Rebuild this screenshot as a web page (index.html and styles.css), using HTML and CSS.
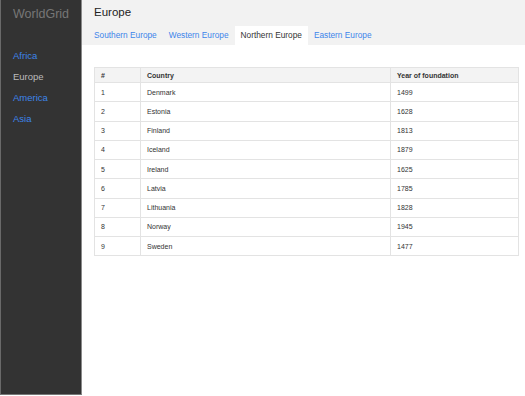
FILE: index.html
```html
<!DOCTYPE html>
<html>
<head>
<meta charset="utf-8">
<title>WorldGrid</title>
<link rel="stylesheet" href="styles.css">
</head>
<body>
<div class="app">
  <aside class="sidebar">
    <div class="brand">WorldGrid</div>
    <nav class="nav">
      <a class="nav-item">Africa</a>
      <a class="nav-item active">Europe</a>
      <a class="nav-item">America</a>
      <a class="nav-item">Asia</a>
    </nav>
  </aside>
  <main class="main">
    <header class="header">
      <h1 class="title">Europe</h1>
      <div class="tabs">
        <a class="tab">Southern Europe</a>
        <a class="tab">Western Europe</a>
        <a class="tab active">Northern Europe</a>
        <a class="tab">Eastern Europe</a>
      </div>
    </header>
    <section class="content">
      <table class="grid">
        <thead>
          <tr><th class="c-num">#</th><th class="c-country">Country</th><th>Year of foundation</th></tr>
        </thead>
        <tbody>
          <tr><td>1</td><td>Denmark</td><td>1499</td></tr>
          <tr><td>2</td><td>Estonia</td><td>1628</td></tr>
          <tr><td>3</td><td>Finland</td><td>1813</td></tr>
          <tr><td>4</td><td>Iceland</td><td>1879</td></tr>
          <tr><td>5</td><td>Ireland</td><td>1625</td></tr>
          <tr><td>6</td><td>Latvia</td><td>1785</td></tr>
          <tr><td>7</td><td>Lithuania</td><td>1828</td></tr>
          <tr><td>8</td><td>Norway</td><td>1945</td></tr>
          <tr><td>9</td><td>Sweden</td><td>1477</td></tr>
        </tbody>
      </table>
    </section>
  </main>
</div>
</body>
</html>
```
FILE: styles.css
```css
html, body {
  margin: 0;
  padding: 0;
  background: #fff;
  font-family: "Liberation Sans", Arial, sans-serif;
}
.app {
  display: flex;
  height: 395px;
}
.sidebar {
  width: 80px;
  flex: none;
  background: #333;
  border-left: 1px solid #6a6a6a;
  border-right: 1px solid #8a8a8a;
  border-bottom: 1px solid #777;
  box-sizing: content-box;
}
.brand {
  color: #777;
  font-size: 12.5px;
  padding: 7px 0 0 12px;
  height: 38px;
}
.nav {
  display: flex;
  flex-direction: column;
}
.nav-item {
  color: #3d85ea;
  font-size: 9.5px;
  padding: 0 0 0 12px;
  height: 21px;
  line-height: 21px;
}
.nav-item.active {
  color: #bbb;
}
.main {
  flex: 1;
  display: flex;
  flex-direction: column;
}
.header {
  background: #f2f2f2;
  height: 45px;
  padding: 0 0 0 12px;
  display: flex;
  flex-direction: column;
}
.title {
  margin: 0;
  font-weight: normal;
  font-size: 11.5px;
  color: #222;
  height: 26px;
  line-height: 24px;
}
.tabs {
  display: flex;
  margin-left: -6px;
  height: 19px;
}
.tab {
  font-size: 8.3px;
  color: #3d85ea;
  padding: 0 6px;
  line-height: 19px;
}
.tab.active {
  background: #fff;
  color: #333;
}
.content {
  padding: 22px 6px 0 12px;
}
.grid {
  width: 100%;
  border-collapse: collapse;
  font-size: 7px;
  color: #333;
}
.grid th, .grid td {
  border: 1px solid #e3e3e3;
  padding: 0 6px;
  text-align: left;
}
.grid th {
  background: #f3f3f3;
  font-weight: bold;
  height: 14px;
}
.grid td {
  height: 18.25px;
}
.c-num {
  width: 33px;
}
.c-country {
  width: 237px;
}
```
